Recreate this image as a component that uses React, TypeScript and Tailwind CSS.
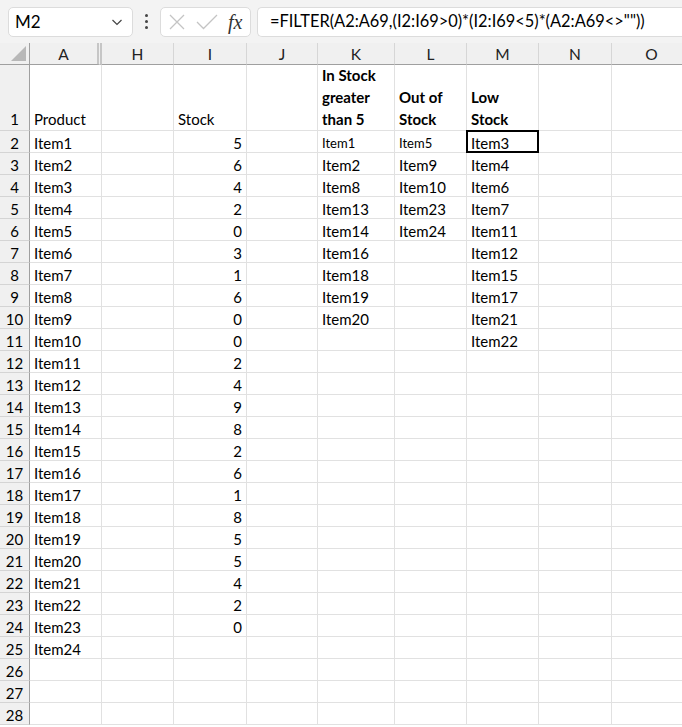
import React from "react";

const cols = ["A", "H", "I", "J", "K", "L", "M", "N", "O"];

const stock = [5, 6, 4, 2, 0, 3, 1, 6, 0, 0, 2, 4, 9, 8, 2, 6, 1, 8, 5, 5, 4, 2, 0];
const over5 = ["Item1", "Item2", "Item8", "Item13", "Item14", "Item16", "Item18", "Item19", "Item20"];
const outOf = ["Item5", "Item9", "Item10", "Item23", "Item24"];
const low = ["Item3", "Item4", "Item6", "Item7", "Item11", "Item12", "Item15", "Item17", "Item21", "Item22"];

type Cell = { text?: string; right?: boolean; small?: boolean };

function rowCells(r: number): Cell[] {
  // r is the spreadsheet row number, starting at 2
  const i = r - 2;
  return [
    { text: i < 24 ? `Item${i + 1}` : undefined },
    {},
    { text: i < stock.length ? String(stock[i]) : undefined, right: true },
    {},
    { text: over5[i], small: i === 0 },
    { text: outOf[i], small: i === 0 },
    { text: low[i] },
    {},
    {},
  ];
}

function Toolbar() {
  return (
    <div className="flex h-[43px] items-center bg-[#f3f3f3] pl-[8px]">
      <div className="flex h-[30px] w-[125px] items-center justify-between rounded-[5px] border border-[#dcdcdc] bg-white pl-[6px] pr-[8px]">
        <span className="text-[17px] text-black">M2</span>
        <svg width="14" height="14" viewBox="0 0 14 14" fill="none">
          <path d="M2.5 5l4.5 4.5L11.5 5" stroke="#444" strokeWidth="1.2" />
        </svg>
      </div>
      <div className="flex w-[27px] flex-col items-center gap-[3px]">
        <span className="h-[3px] w-[3px] rounded-full bg-[#444]" />
        <span className="h-[3px] w-[3px] rounded-full bg-[#444]" />
        <span className="h-[3px] w-[3px] rounded-full bg-[#444]" />
      </div>
      <div className="flex h-[30px] w-[91px] items-center rounded-[5px] border border-[#dcdcdc] bg-white pl-[7px]">
        <svg width="18" height="18" viewBox="0 0 18 18" fill="none">
          <path d="M2 2l14 14M16 2L2 16" stroke="#c4c4c4" strokeWidth="1.3" />
        </svg>
        <svg width="22" height="18" viewBox="0 0 22 18" fill="none" className="ml-[10px]">
          <path d="M1 9l6.5 6.5L21 2" stroke="#c4c4c4" strokeWidth="1.3" />
        </svg>
        <span className="ml-[10px] font-['Liberation_Serif',serif] text-[20px] italic leading-none text-[#333]">fx</span>
      </div>
      <div className="ml-[6px] flex h-[30px] flex-1 items-center rounded-l-[5px] border border-r-0 border-[#dcdcdc] bg-white pl-[12px]">
        <span className="whitespace-nowrap text-[16.4px] text-black">
          =FILTER(A2:A69,(I2:I69&gt;0)*(I2:I69&lt;5)*(A2:A69&lt;&gt;""))
        </span>
      </div>
    </div>
  );
}

export default function App() {
  const rows = Array.from({ length: 27 }, (_, k) => k + 2);
  return (
    <div className="h-[727px] w-[682px] overflow-hidden bg-white font-['Lato',sans-serif] text-black">
      <Toolbar />
      <div className="grid grid-cols-[30px_72px_72px_73px_71px_77px_72px_72px_73px_80px] grid-rows-[22px_66px_repeat(27,22px)]">
        {/* column headers */}
        <div className="relative border-b border-r border-[#9f9f9f] bg-[#f0f0f0]">
          <div className="absolute bottom-[3px] right-[3px] h-0 w-0 border-b-[15px] border-l-[15px] border-b-[#b8b8b8] border-l-transparent" />
        </div>
        {cols.map((c, i) => (
          <div
            key={c}
            className={`flex items-center justify-center border-b border-[#9f9f9f] bg-[#f0f0f0] pt-[2px] text-[15.5px] leading-none text-[#222] ${
              i === 0 ? "border-r-[5px] border-r-[#c6c6c6] border-double" : "border-r border-r-[#d6d6d6]"
            }`}
          >
            {c}
          </div>
        ))}

        {/* row 1 */}
        <div className="flex items-end justify-center border-b border-r border-b-[#d4d4d4] border-r-[#9f9f9f] bg-[#f0f0f0] text-[15px] leading-[22px]">
          1
        </div>
        <div className="flex items-end border-b border-r border-[#e1e1e1] pl-[4px] text-[15px] leading-[22px]">Product</div>
        <div className="border-b border-r border-[#e1e1e1]" />
        <div className="flex items-end border-b border-r border-[#e1e1e1] pl-[4px] text-[15px] leading-[22px]">Stock</div>
        <div className="border-b border-r border-[#e1e1e1]" />
        <div className="flex items-end border-b border-r border-[#e1e1e1] pl-[4px] text-[15px] font-bold leading-[22px]">
          <span>
            In Stock
            <br />
            greater
            <br />
            than 5
          </span>
        </div>
        <div className="flex items-end border-b border-r border-[#e1e1e1] pl-[4px] text-[15px] font-bold leading-[22px]">
          <span>
            Out of
            <br />
            Stock
          </span>
        </div>
        <div className="flex items-end border-b border-r border-[#e1e1e1] pl-[4px] text-[15px] font-bold leading-[22px]">
          <span>
            Low
            <br />
            Stock
          </span>
        </div>
        <div className="border-b border-r border-[#e1e1e1]" />
        <div className="border-b border-r border-[#e1e1e1]" />

        {rows.map((r) => (
          <React.Fragment key={r}>
            <div className="flex items-center justify-center border-b border-r border-b-[#d4d4d4] border-r-[#9f9f9f] bg-[#f0f0f0] pt-[3px] text-[15px] leading-none">
              {r}
            </div>
            {rowCells(r).map((c, j) => {
              const selected = r === 2 && j === 6;
              return (
                <div
                  key={j}
                  className={`flex items-center overflow-hidden whitespace-nowrap px-[4px] pt-[3px] leading-none ${
                    c.right ? "justify-end" : "justify-start"
                  } ${c.small ? "text-[13px]" : "text-[15px]"} ${
                    selected
                      ? "relative z-10 -ml-px -mt-px border-2 border-black pl-[3px]"
                      : "border-b border-r border-[#e1e1e1]"
                  }`}
                >
                  {c.text}
                </div>
              );
            })}
          </React.Fragment>
        ))}
      </div>
    </div>
  );
}
